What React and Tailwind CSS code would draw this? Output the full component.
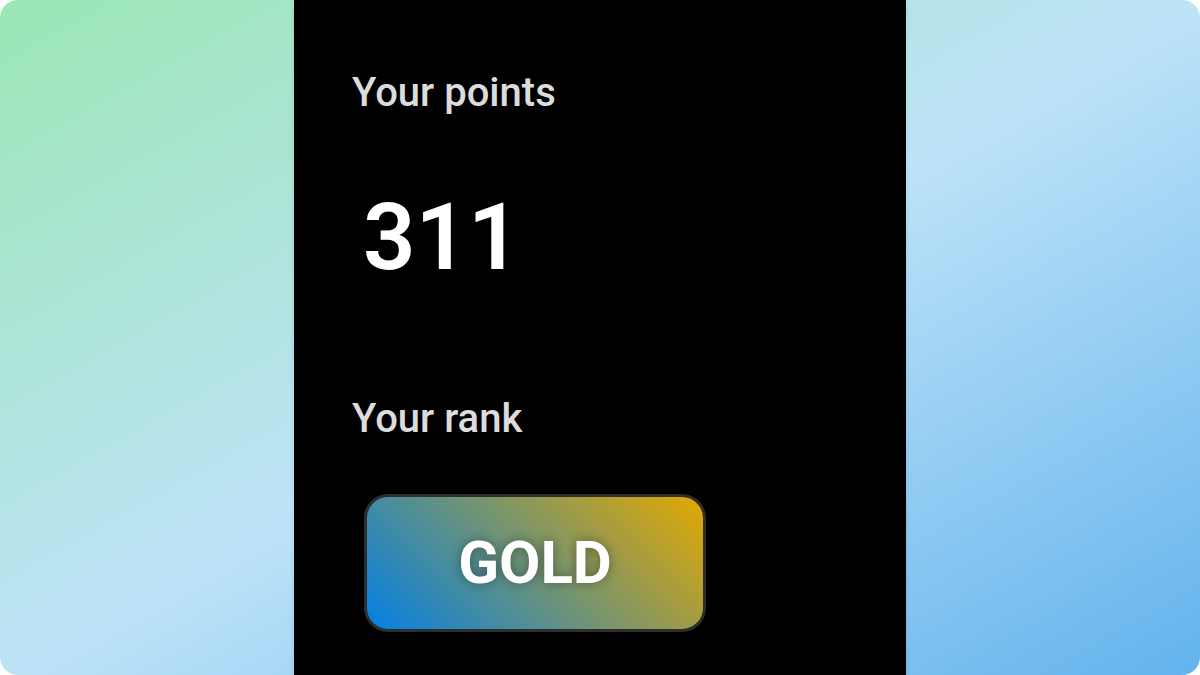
import React from 'react';

const StatLabel = ({ children }) => (
  <h2 className="font-['Roboto',sans-serif] text-[40px] leading-[48px] font-medium text-[#dcdcdc]">{children}</h2>
);

const RankBadge = ({ rank }) => (
  <div className="ml-3 mt-[51px] flex h-[138px] w-[342px] items-center justify-center rounded-3xl border-[3px] border-[#2e2e2e] bg-[linear-gradient(45deg,#0080e6,#e6a800)] bg-origin-border">
    <span className="font-['Roboto',sans-serif] text-[60px] leading-[64px] font-bold text-white [text-shadow:0_0_12px_rgba(0,0,0,0.4)]">{rank}</span>
  </div>
);

const App = () => {
  const points = 311;
  const rank = 'GOLD';

  return (
    <div className="bg-white">
      <main className="flex min-h-screen justify-center overflow-hidden rounded-[18px] bg-linear-to-br/srgb from-[#9ae6b4] via-[#bee3f8] to-[#63b3ed]">
        <section className="w-[51%] bg-black px-[58px] pt-[69px] pb-9 shadow-md">
          <StatLabel>Your points</StatLabel>
          <p className="ml-[11px] mt-[65px] font-['Roboto',sans-serif] text-[92px] leading-[112px] font-semibold text-white">{points}</p>
          <div className="mt-[101px]">
            <StatLabel>Your rank</StatLabel>
            <RankBadge rank={rank} />
          </div>
        </section>
      </main>
    </div>
  );
};

export default App;
